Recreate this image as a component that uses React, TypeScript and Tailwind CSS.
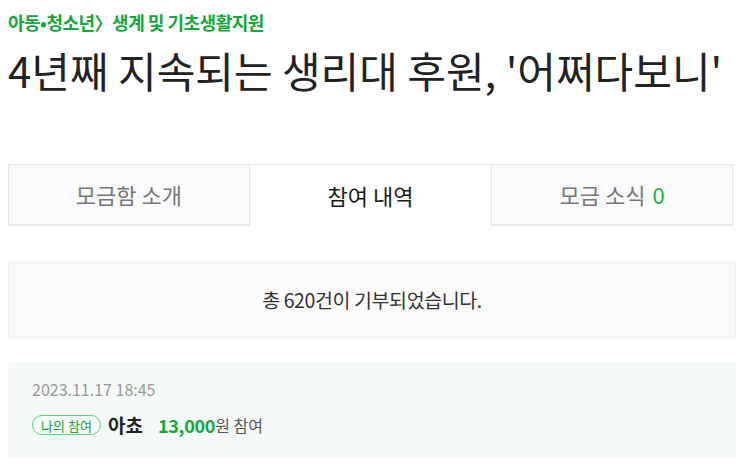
import React from "react";

const tabs = [
  { label: "모금함 소개", active: false },
  { label: "참여 내역", active: true },
  { label: "모금 소식", active: false, count: 0 },
];

function App() {
  return (
    <div className="w-[743px] h-[465px] overflow-hidden bg-white pl-2 pr-[7px] font-['Noto_Sans_CJK_KR',sans-serif]">
      {/* Heading */}
      <div className="pt-[9px]">
        <p className="text-[18px] font-bold leading-[26px] tracking-[-0.5px] text-[#12a83a]">
          아동•청소년〉생계 및 기초생활지원
        </p>
        <h1 className="mt-[9px] text-[42px] leading-[52px] text-[#222]">
          4년째 지속되는 생리대 후원, '어쩌다보니'
        </h1>
      </div>

      {/* Tabs */}
      <div className="mt-[68px] grid grid-cols-3 w-[725px] h-[62px]">
        {tabs.map((tab) => (
          <div
            key={tab.label}
            className={
              tab.active
                ? "flex items-center justify-center bg-white border-t border-[#e8e8e8] text-[22px] text-[#1a1a1a]"
                : "flex items-center justify-center bg-[#fafafc] border border-[#e6e6e6] border-b-2 border-b-[#e8e8e8] text-[22px] text-[#777]"
            }
          >
            {tab.label}
            {tab.count !== undefined && (
              <span className="ml-[7px] text-[#14b23c]">{tab.count}</span>
            )}
          </div>
        ))}
      </div>

      {/* Summary */}
      <div className="mt-[36px] h-[76px] flex items-center justify-center rounded-[3px] border border-[#efefef] bg-[#fafafa] text-[19.5px] tracking-[-0.4px] text-[#333]">
        총 620건이 기부되었습니다.
      </div>

      {/* Donation item */}
      <div className="mt-[24px] h-[95px] bg-[#f5f9f7] pl-6 pt-[16px]">
        <p className="text-[16px] leading-[22px] text-[#999]">2023.11.17 18:45</p>
        <div className="mt-[11px] flex items-center">
          <span className="flex h-[20px] w-[69px] items-center justify-center rounded-full border border-[#5dd37c] text-[13px] text-[#1aa23c]">
            나의 참여
          </span>
          <span className="ml-[7px] text-[19px] font-bold text-[#222]">아쵸</span>
          <span className="ml-[15px] text-[18px] font-bold tracking-[-0.3px] text-[#12a83a]">13,000</span>
          <span className="text-[16px] text-[#555]">원 참여</span>
        </div>
      </div>
    </div>
  );
}

export default App;
